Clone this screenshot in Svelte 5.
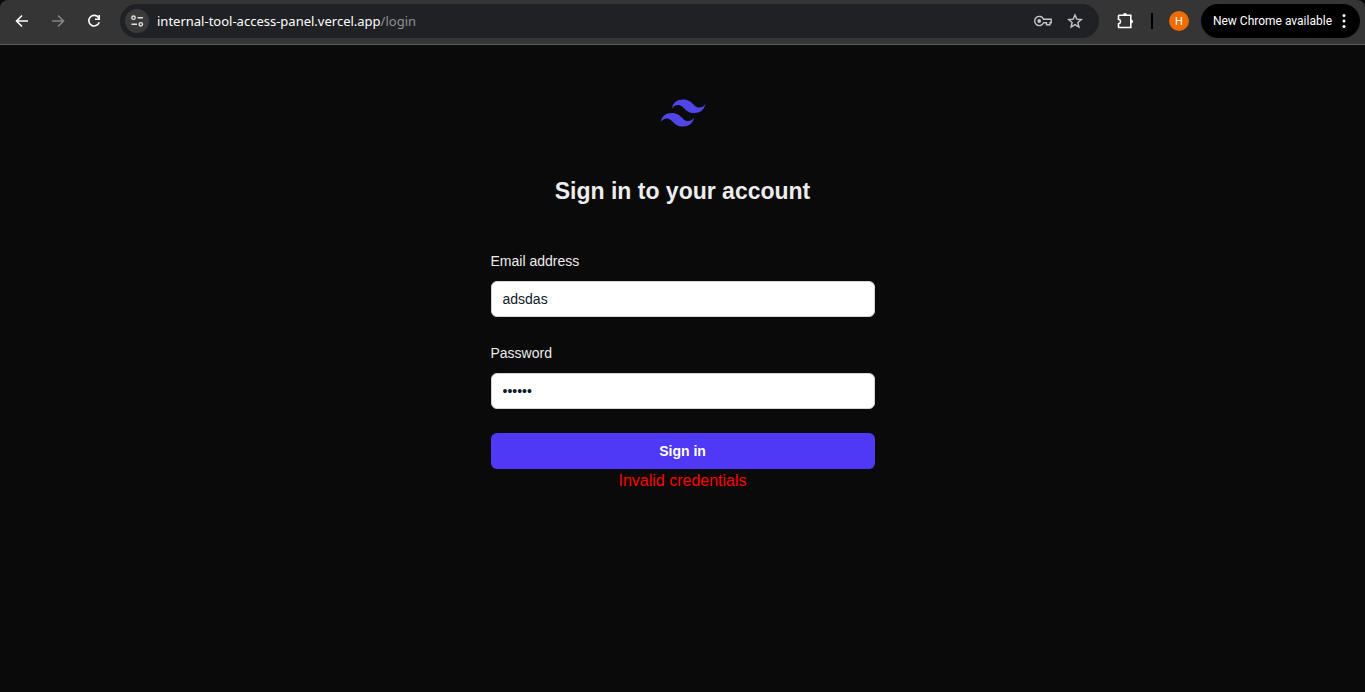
<script>
  let email = "adsdas";
  let password = "secret";
  let error = "Invalid credentials";

  let address = {
    host: "internal-tool-access-panel.vercel.app",
    path: "/login",
  };

  const handleSubmit = () => {
    error = "Invalid credentials";
  };
</script>

<header class="toolbar">
  <nav class="nav" aria-label="Browser navigation">
    <button type="button" class="icon-btn" aria-label="Back">
      <svg width="20" height="20" viewBox="0 0 20 20" aria-hidden="true">
        <path d="M16 10H5M10 4.500L4.500 10l5.500 5.500" class="stroke" />
      </svg>
    </button>
    <button type="button" class="icon-btn icon-btn--off" aria-label="Forward">
      <svg width="20" height="20" viewBox="0 0 20 20" aria-hidden="true">
        <path d="M4 10h11M10 4.500l5.500 5.500l-5.500 5.500" class="stroke" />
      </svg>
    </button>
    <button type="button" class="icon-btn" aria-label="Reload">
      <svg width="20" height="20" viewBox="0 0 20 20" aria-hidden="true">
        <path d="M14.600 6.800A5.300 5.300 0 1 0 15.200 11.200" class="stroke" />
        <path d="M15.200 4v4.200H11" class="stroke" />
      </svg>
    </button>
  </nav>

  <div class="omnibox">
    <button type="button" class="site-info" aria-label="View site information">
      <svg width="16" height="16" viewBox="0 0 16 16" aria-hidden="true">
        <circle cx="4.500" cy="4.700" r="1.700" class="stroke" />
        <path d="M8.500 4.700H14M2.500 11.300H8" class="stroke" />
        <circle cx="11.800" cy="11.300" r="1.700" class="stroke" />
      </svg>
    </button>
    <a class="address" href="/login">{address.host}<span>{address.path}</span></a>
    <button type="button" class="icon-btn icon-btn--soft" aria-label="Manage passwords">
      <svg width="20" height="20" viewBox="0 0 20 20" aria-hidden="true">
        <path
          d="M10.500 8.200A4.600 4.600 0 1 0 10.500 11.800H13.500V13.800H17V11.800H18.200V8.200Z"
          class="stroke"
        />
        <circle cx="6.200" cy="10" r="1.900" fill="currentColor" />
      </svg>
    </button>
    <button type="button" class="icon-btn icon-btn--soft" aria-label="Bookmark this page">
      <svg width="20" height="20" viewBox="0 0 20 20" aria-hidden="true">
        <path
          d="M10 4l1.800 4.100l4.500.4l-3.400 3l1 4.500L10 13.600L6.100 16l1-4.500l-3.400-3l4.500-.4Z"
          class="stroke"
        />
      </svg>
    </button>
  </div>

  <button type="button" class="icon-btn" aria-label="Extensions">
    <svg width="20" height="20" viewBox="0 0 20 20" aria-hidden="true">
      <path
        d="M4.200 4.200H15.800V16.500H4.200Q3.500 16.500 3.500 15.800V12.800C6.300 12.200 6.300 9 3.500 8.300V4.900Q3.500 4.200 4.200 4.200Z"
        class="stroke"
      />
      <path d="M8 4a2 2 0 0 1 4 0ZM16 8.400a2 2 0 0 1 0 4Z" fill="currentColor" />
    </svg>
  </button>
  <span class="divider"></span>
  <button type="button" class="avatar" aria-label="Profile">H</button>
  <button type="button" class="update">
    New Chrome available
    <svg width="4" height="16" viewBox="0 0 4 16" fill="currentColor" aria-hidden="true">
      <circle cx="2" cy="2.500" r="1.500" />
      <circle cx="2" cy="8" r="1.500" />
      <circle cx="2" cy="13.500" r="1.500" />
    </svg>
  </button>
</header>

<main class="page">
  <svg class="logo" width="48" height="40" viewBox="-1.8 -7.8 57.6 48" role="img" aria-label="Your Company">
    <path
      d="M27 0C19.8 0 15.3 3.6 13.5 10.8C16.2 7.2 19.35 5.85 22.95 6.75C25.004 7.263 26.472 8.754 28.097 10.403C30.744 13.09 33.808 16.2 40.5 16.2C47.7 16.2 52.2 12.6 54 5.4C51.3 9 48.15 10.35 44.55 9.45C42.496 8.937 41.028 7.446 39.403 5.797C36.756 3.11 33.692 0 27 0ZM13.5 16.2C6.3 16.2 1.8 19.8 0 27C2.7 23.4 5.85 22.05 9.45 22.95C11.504 23.464 12.972 24.954 14.597 26.603C17.244 29.29 20.308 32.4 27 32.4C34.2 32.4 38.7 28.8 40.5 21.6C37.8 25.2 34.65 26.55 31.05 25.65C28.996 25.137 27.528 23.646 25.903 21.997C23.256 19.31 20.192 16.2 13.5 16.2Z"
      fill="#4f46e5"
    />
  </svg>
  <h1>Sign in to your account</h1>

  <form on:submit|preventDefault={handleSubmit} novalidate>
    <div class="field">
      <label for="email">Email address</label>
      <input id="email" type="email" autocomplete="email" bind:value={email} />
    </div>
    <div class="field">
      <label for="password">Password</label>
      <input
        id="password"
        type="password"
        autocomplete="current-password"
        bind:value={password}
      />
    </div>
    <button type="submit" class="submit">Sign in</button>
  </form>
  {#if error}
    <p class="error" role="alert">{error}</p>
  {/if}
</main>

<style>
  :global(body) {
    margin: 0;
    background: #0a0a0a;
    color: #ededed;
    font-family: "Liberation Sans", Arial, Helvetica, sans-serif;
  }

  button {
    border: none;
    padding: 0;
    background: transparent;
    color: inherit;
    font: inherit;
    cursor: pointer;
  }

  svg {
    display: block;
  }

  .stroke {
    fill: none;
    stroke: currentColor;
    stroke-width: 1.6;
  }

  .toolbar {
    display: flex;
    align-items: center;
    padding: 4px 5px 6px 12px;
    border-bottom: 1px solid #5c5c5c;
    border-radius: 8px 8px 0 0;
    background: #353535;
    color: #fff;
    font-family: "Noto Sans", "Segoe UI", sans-serif;
  }

  .nav {
    display: flex;
    gap: 16px;
    margin-right: 16px;
  }

  .icon-btn {
    flex: none;
  }

  .icon-btn--off {
    color: #858585;
  }

  .icon-btn--soft {
    color: #c4c7c5;
  }

  .icon-btn--soft .stroke,
  .site-info .stroke {
    stroke-width: 1.4;
  }

  .omnibox {
    flex: 1;
    min-width: 0;
    height: 34px;
    box-sizing: border-box;
    display: flex;
    align-items: center;
    gap: 12px;
    margin-right: 16px;
    padding: 0 14px 0 5px;
    border-radius: 17px;
    background: #202124;
  }

  .site-info {
    flex: none;
    display: grid;
    place-items: center;
    width: 24px;
    height: 24px;
    margin-right: -4px;
    border-radius: 50%;
    background: #3a3a3a;
    color: #e3e3e3;
  }

  .address {
    flex: 1;
    min-width: 0;
    overflow: hidden;
    white-space: nowrap;
    color: #fff;
    font-size: 13px;
    line-height: 20px;
    text-decoration: none;
  }

  .address span {
    color: #8e9195;
  }

  .divider {
    width: 2px;
    height: 16px;
    margin: 0 16px;
    background: #000;
  }

  .avatar {
    flex: none;
    width: 20px;
    height: 20px;
    margin-right: 12px;
    border-radius: 50%;
    background: #ef6c00;
    font-family: Roboto, sans-serif;
    font-size: 11px;
    line-height: 22px;
    text-align: center;
  }

  .update {
    flex: none;
    display: flex;
    align-items: center;
    justify-content: space-between;
    gap: 10px;
    min-width: 159px;
    height: 34px;
    padding: 0 14px 0 12px;
    border-radius: 17px;
    background: #000;
    font-family: Roboto, "Segoe UI", sans-serif;
    font-size: 12px;
    white-space: nowrap;
  }

  .page {
    max-width: 384px;
    margin: 0 auto;
    padding: 48px 24px;
  }

  .logo {
    margin: 0 auto;
  }

  h1 {
    margin: 40px 0;
    font-size: 23px;
    font-weight: 700;
    line-height: 36px;
    text-align: center;
  }

  form {
    display: grid;
    gap: 24px;
  }

  .field {
    display: grid;
    gap: 8px;
  }

  label {
    font-size: 14px;
    line-height: 24px;
  }

  input {
    box-sizing: border-box;
    width: 100%;
    height: 36px;
    padding: 0 11px;
    border: 1px solid #d1d5dc;
    border-radius: 6px;
    background: #fff;
    color: #101828;
    font-family: inherit;
    font-size: 14px;
  }

  .submit {
    height: 36px;
    border-radius: 6px;
    background: #4f39f6;
    color: #fff;
    font-size: 14px;
    font-weight: 600;
    line-height: 24px;
  }

  .error {
    margin: 0;
    color: #f00;
    font-size: 16px;
    line-height: 24px;
    text-align: center;
  }
</style>
